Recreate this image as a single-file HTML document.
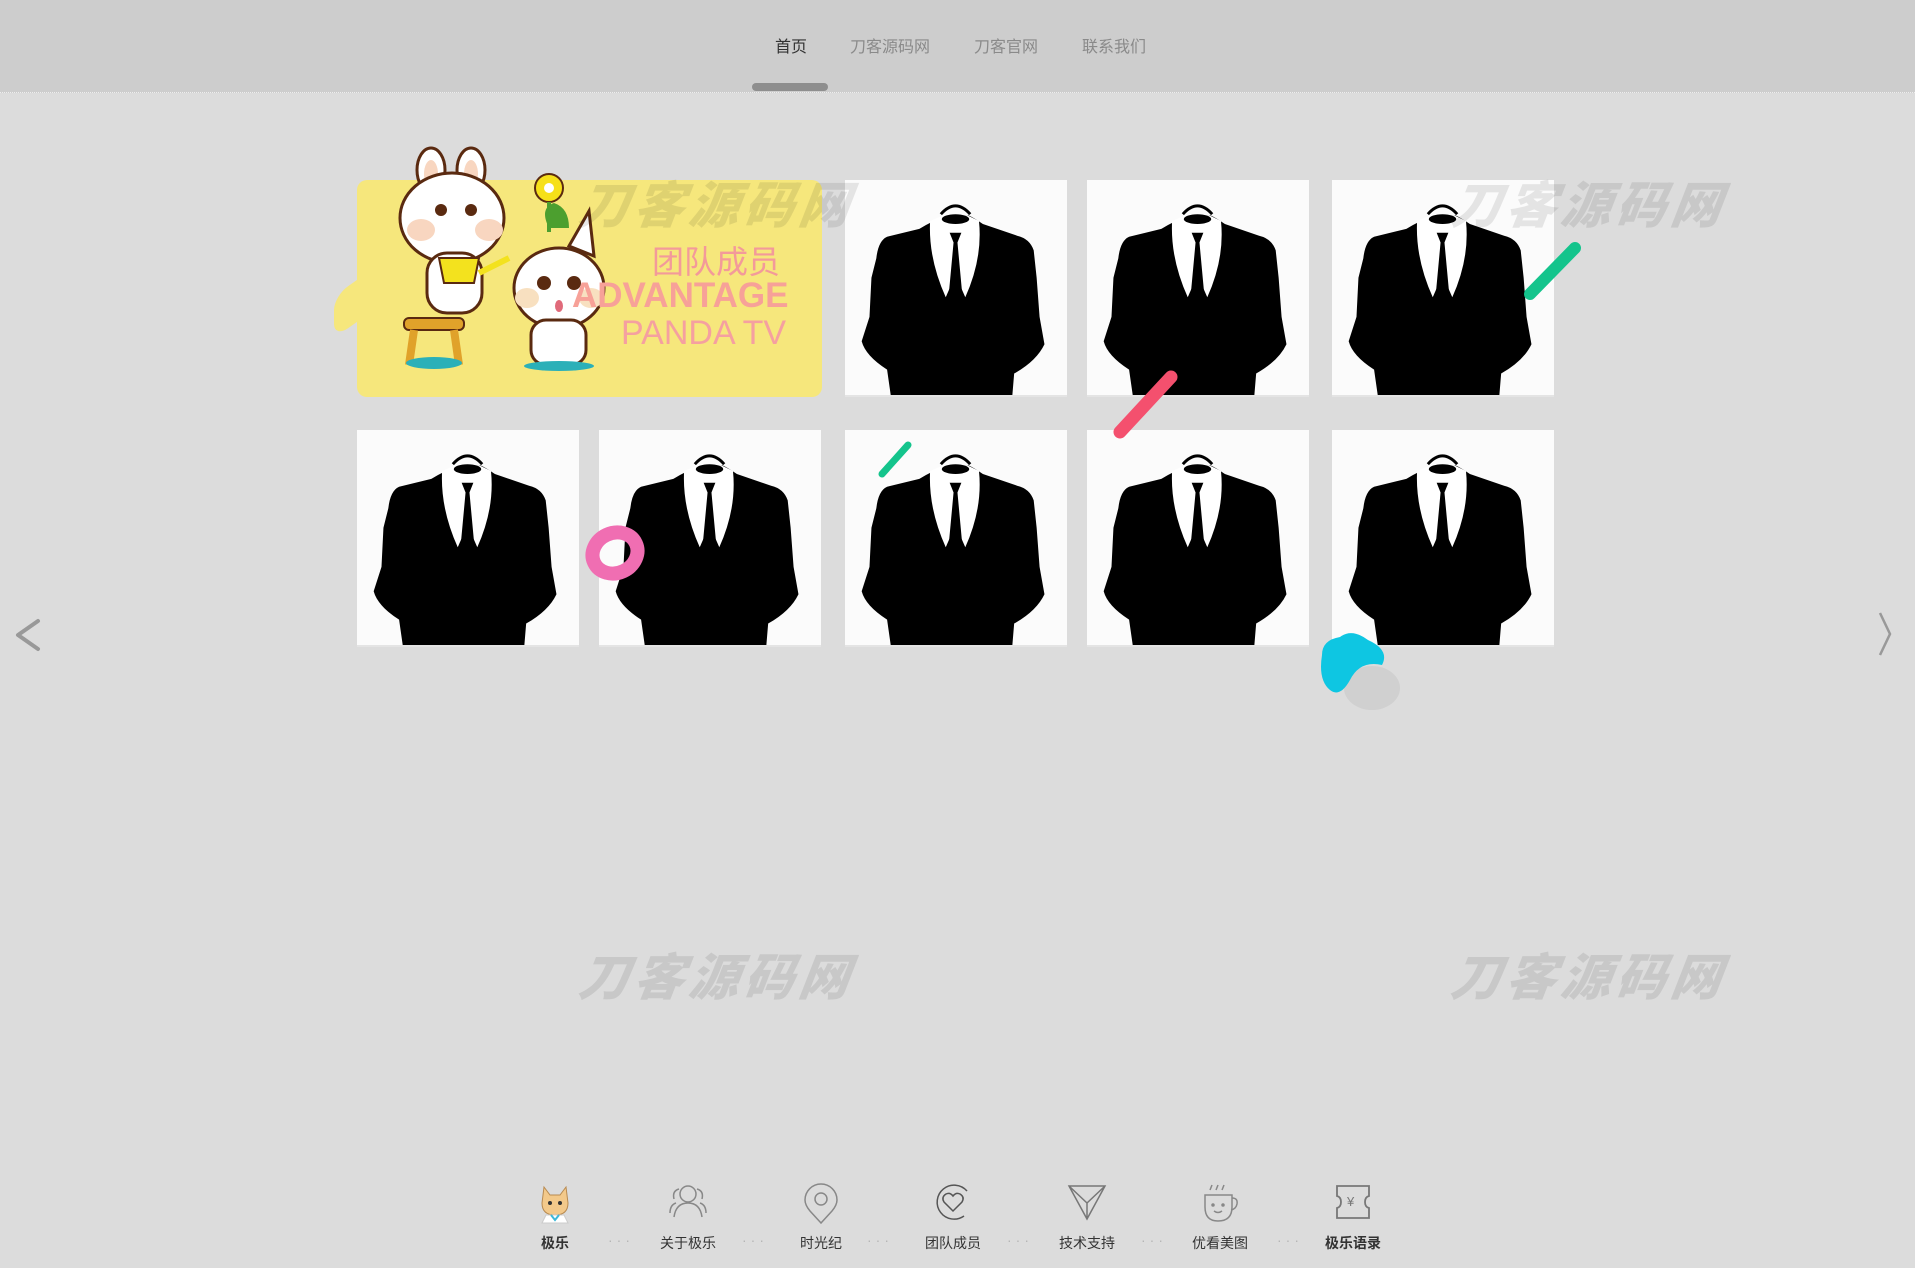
<!DOCTYPE html>
<html><head><meta charset="utf-8">
<style>
*{margin:0;padding:0;box-sizing:border-box}
body{width:1915px;height:1268px;background:#dcdcdc;position:relative;overflow:hidden;font-family:"Liberation Sans","Noto Sans CJK SC",sans-serif}
.hdr{position:absolute;left:0;top:0;width:1915px;height:93px;background:#cdcdcd;border-bottom:1px dotted #eee}
.nav{position:absolute;top:33px;font-size:16px;color:#8a8a8a;white-space:nowrap}
.bar{position:absolute;left:752px;top:83px;width:76px;height:8px;border-radius:4px;background:#8e8e8e}
.card{position:absolute;width:222px;height:217px;background:#fbfbfb;border-bottom:2px solid #e4e4e4;overflow:hidden}
.card svg{display:block}
.wm{position:absolute;font-size:50px;font-weight:900;font-style:italic;color:rgba(0,0,0,0.09);letter-spacing:5px;font-family:"Noto Sans CJK SC",sans-serif;white-space:nowrap;transform:skewX(-8deg)}
.yel{position:absolute;left:357px;top:180px;width:465px;height:217px;background:#f6e77c;border-radius:10px}
.bn{position:absolute;top:1233px;font-size:14px;color:#333;transform:translateX(-50%);white-space:nowrap}
.ic{position:absolute;top:1183px;transform:translateX(-50%)}
.dots{position:absolute;top:1232px;font-size:14px;color:#b5b5b5;letter-spacing:4px;transform:translateX(-50%)}
</style></head><body>
<div class="hdr">
<div class="nav" style="left:775px;color:#333">首页</div>
<div class="nav" style="left:850px">刀客源码网</div>
<div class="nav" style="left:974px">刀客官网</div>
<div class="nav" style="left:1082px">联系我们</div>
<div class="bar"></div>
</div>

<div class="yel"></div>
<div style="position:absolute;left:334px;top:282px;width:40px;height:42px;background:#f6e77c;border-radius:14px 0 0 14px;transform:skewY(-35deg)"></div>
<!-- bunny -->
<svg style="position:absolute;left:395px;top:145px" width="220" height="230" viewBox="0 0 220 230">
<g transform="translate(14,3)">
<ellipse cx="22" cy="22" rx="14" ry="22" fill="#fff" stroke="#5a2a10" stroke-width="3"/>
<ellipse cx="22" cy="26" rx="7" ry="14" fill="#f8d6c0"/>
<ellipse cx="62" cy="22" rx="14" ry="22" fill="#fff" stroke="#5a2a10" stroke-width="3"/>
<ellipse cx="62" cy="26" rx="7" ry="14" fill="#f8d6c0"/>
<ellipse cx="43" cy="70" rx="52" ry="45" fill="#fff" stroke="#5a2a10" stroke-width="3"/>
<circle cx="32" cy="62" r="6" fill="#5a2a10"/><circle cx="62" cy="62" r="6" fill="#5a2a10"/>
<ellipse cx="12" cy="82" rx="14" ry="11" fill="#f8d6c0"/><ellipse cx="80" cy="82" rx="14" ry="11" fill="#f8d6c0"/>
<rect x="18" y="105" width="55" height="60" rx="20" fill="#fff" stroke="#5a2a10" stroke-width="3"/>
<path d="M30 110 h40 l-5 25 h-30z" fill="#f3e21e" stroke="#5a2a10" stroke-width="2"/>
<path d="M70 125 l30 -15" stroke="#f3e21e" stroke-width="6"/>
<rect x="-5" y="170" width="60" height="12" rx="5" fill="#e0a22a" stroke="#5a2a10" stroke-width="2"/>
<path d="M5 182 l-5 35 M45 182 l5 35" stroke="#e0a22a" stroke-width="8"/>
<ellipse cx="25" cy="215" rx="28" ry="6" fill="#2bb0b8"/>
<path d="M140 80 q-10-20 5-25 q15 5 15 25z" fill="#4c9f2f"/>
<circle cx="140" cy="40" r="14" fill="#f6e01a" stroke="#5a2a10" stroke-width="2"/>
<circle cx="140" cy="40" r="5" fill="#fff"/>
<path d="M140 54 v30" stroke="#4c9f2f" stroke-width="4"/>
<path d="M160 98 l20 -35 l5 45z" fill="#fff" stroke="#5a2a10" stroke-width="3"/>
<ellipse cx="150" cy="140" rx="45" ry="40" fill="#fff" stroke="#5a2a10" stroke-width="3"/>
<ellipse cx="118" cy="150" rx="12" ry="10" fill="#f8e0c0"/><ellipse cx="182" cy="150" rx="12" ry="10" fill="#f8e0c0"/>
<circle cx="135" cy="135" r="7" fill="#5a2a10"/><circle cx="165" cy="135" r="7" fill="#5a2a10"/>
<ellipse cx="150" cy="158" rx="4" ry="6" fill="#e06a7a"/>
<rect x="122" y="172" width="55" height="45" rx="15" fill="#fff" stroke="#5a2a10" stroke-width="3"/>
<ellipse cx="150" cy="218" rx="35" ry="5" fill="#2bb0b8"/>
</g>
</svg>
<div style="position:absolute;left:652px;top:237px;font-size:32px;color:#f39a9a;font-family:'Noto Sans CJK SC',sans-serif">团队成员</div>
<div style="position:absolute;left:572px;top:276px;font-size:35px;color:#f7a198;font-weight:bold">ADVANTAGE</div>
<div style="position:absolute;left:621px;top:314px;font-size:34px;color:#f5a0a0">PANDA TV</div>

<svg width="0" height="0" style="position:absolute"><defs>
<g id="suit">
<rect width="225" height="222" fill="#fbfbfb"/>
<path d="M100,38 Q88,42 75,50 L42,58 Q33,62 31,80 L26,100 L24,140 L16,165 Q20,180 42,194 L46,222 L170,222 L172,198 Q195,185 203,168 L198,140 L195,100 L192,72 Q188,60 175,57 L140,45 Q130,38 125,36 Z" fill="#000"/>
<path d="M86,42 Q84,80 102,120 L112,97 L122,120 Q140,80 136,42 L124,36 L100,36 Z" fill="#fff"/>
<path d="M106,54 L118,54 L114,64 L119,118 L112,124 L105,118 L110,64 Z" fill="#000"/>
<path d="M97,35 Q112,18 127,35" stroke="#000" stroke-width="3" fill="none"/>
<ellipse cx="112" cy="40" rx="14" ry="5" fill="#000"/>
</g></defs></svg>

<div class="card" style="left:845px;top:180px"><svg width="222" height="217" viewBox="0 0 225 222"><use href="#suit"/></svg></div>
<div class="card" style="left:1087px;top:180px"><svg width="222" height="217" viewBox="0 0 225 222"><use href="#suit"/></svg></div>
<div class="card" style="left:1332px;top:180px"><svg width="222" height="217" viewBox="0 0 225 222"><use href="#suit"/></svg></div>
<div class="card" style="left:357px;top:430px"><svg width="222" height="217" viewBox="0 0 225 222"><use href="#suit"/></svg></div>
<div class="card" style="left:599px;top:430px"><svg width="222" height="217" viewBox="0 0 225 222"><use href="#suit"/></svg></div>
<div class="card" style="left:845px;top:430px"><svg width="222" height="217" viewBox="0 0 225 222"><use href="#suit"/></svg></div>
<div class="card" style="left:1087px;top:430px"><svg width="222" height="217" viewBox="0 0 225 222"><use href="#suit"/></svg></div>
<div class="card" style="left:1332px;top:430px"><svg width="222" height="217" viewBox="0 0 225 222"><use href="#suit"/></svg></div>

<div class="wm" style="left:580px;top:166px">刀客源码网</div>
<div class="wm" style="left:1452px;top:166px">刀客源码网</div>
<div class="wm" style="left:580px;top:938px">刀客源码网</div>
<div class="wm" style="left:1452px;top:938px">刀客源码网</div>

<svg style="position:absolute;left:0;top:0" width="1915" height="1268">
<line x1="1530" y1="294" x2="1575" y2="248" stroke="#14c48c" stroke-width="12" stroke-linecap="round"/>
<line x1="1120" y1="432" x2="1171" y2="377" stroke="#f4506e" stroke-width="13" stroke-linecap="round"/>
<line x1="882" y1="474" x2="908" y2="445" stroke="#14c48c" stroke-width="7" stroke-linecap="round"/>
<ellipse cx="615" cy="553" rx="23" ry="20" fill="none" stroke="#f06eb2" stroke-width="14" transform="rotate(-25 615 553)"/>
<ellipse cx="1372" cy="688" rx="28" ry="22" fill="#c8c8c8" opacity=".6"/>
<path d="M1322 655 Q1322 640 1340 637 Q1352 628 1368 640 Q1390 650 1382 665 Q1360 660 1350 680 Q1340 698 1330 690 Q1318 680 1322 655Z" fill="#0ec6e2"/>
<path d="M16 623 L36 609 M16 623 L36 637" stroke="#999" stroke-width="4" stroke-linecap="round" transform="translate(2,12)"/>
<path d="M1880 613 L1890 634 L1880 655" stroke="#999" stroke-width="2.5" fill="none"/>
</svg>

<!-- bottom nav -->
<svg class="ic" style="left:555px" width="34" height="42" viewBox="0 0 34 42"><path d="M6 4 L12 12 H22 L28 4 L30 20 Q30 32 17 32 Q4 32 4 20Z" fill="#f3c98a" stroke="#b88a50"/><circle cx="12" cy="20" r="2" fill="#333"/><circle cx="22" cy="20" r="2" fill="#333"/><path d="M8 32 L4 40 H30 L26 32Z" fill="#fff" stroke="#ccc"/><path d="M13 32 L17 37 L21 32" stroke="#3cb8d8" stroke-width="2" fill="none"/></svg>
<div class="bn" style="left:555px;font-weight:bold">极乐</div>
<svg class="ic" style="left:688px" width="42" height="36" viewBox="0 0 42 36" fill="none" stroke="#888" stroke-width="1.5"><circle cx="21" cy="11" r="8"/><path d="M7 34 Q9 20 21 20 Q33 20 35 34"/><path d="M12 6 Q5 8 7 16 M30 6 Q37 8 35 16 M3 30 Q3 22 9 20 M39 30 Q39 22 33 20"/></svg>
<div class="bn" style="left:688px">关于极乐</div>
<svg class="ic" style="left:821px" width="36" height="42" viewBox="0 0 36 42" fill="none" stroke="#888" stroke-width="1.5"><path d="M18 40 L7 28 Q2 22 2 17 A16 16 0 0 1 34 17 Q34 22 29 28Z"/><circle cx="18" cy="16" r="6"/></svg>
<div class="bn" style="left:821px">时光纪</div>
<svg class="ic" style="left:953px" width="38" height="38" viewBox="0 0 38 38" fill="none" stroke="#555" stroke-width="1.5"><path d="M30 33 A17 17 0 1 1 33 8"/><path d="M19 28 L10 19 Q7 14 12 11 Q16 9 19 13 Q22 9 26 11 Q31 14 28 19Z"/></svg>
<div class="bn" style="left:953px">团队成员</div>
<svg class="ic" style="left:1087px" width="40" height="38" viewBox="0 0 40 38" fill="none" stroke="#777" stroke-width="1.5"><path d="M2 3 L38 3 L20 36Z M2 3 L20 20 L38 3 M20 20 V36"/></svg>
<div class="bn" style="left:1087px">技术支持</div>
<svg class="ic" style="left:1220px" width="40" height="40" viewBox="0 0 40 40" fill="none" stroke="#888" stroke-width="1.5"><path d="M12 2 l-2 5 M18 2 l-2 5 M24 2 l-2 5"/><path d="M5 12 H32 V24 Q32 38 18 38 Q5 38 5 24Z"/><path d="M32 15 Q38 15 37 21 Q36 26 31 27"/><circle cx="13" cy="22" r="1" fill="#888"/><circle cx="23" cy="22" r="1" fill="#888"/><path d="M14 28 Q18 31 22 28"/></svg>
<div class="bn" style="left:1220px">优看美图</div>
<svg class="ic" style="left:1353px" width="38" height="38" viewBox="0 0 38 38" fill="none" stroke="#777" stroke-width="1.8"><path d="M3 3 H35 V13 Q31 14 31 19 Q31 24 35 25 V35 H3 V25 Q7 24 7 19 Q7 14 3 13Z"/><text x="13" y="23" font-size="13" fill="#777" stroke="none" font-family="Liberation Sans">¥</text></svg>
<div class="bn" style="left:1353px;font-weight:bold">极乐语录</div>
<div class="dots" style="left:621px">···</div>
<div class="dots" style="left:755px">···</div>
<div class="dots" style="left:880px">···</div>
<div class="dots" style="left:1020px">···</div>
<div class="dots" style="left:1154px">···</div>
<div class="dots" style="left:1290px">···</div>
</body></html>
